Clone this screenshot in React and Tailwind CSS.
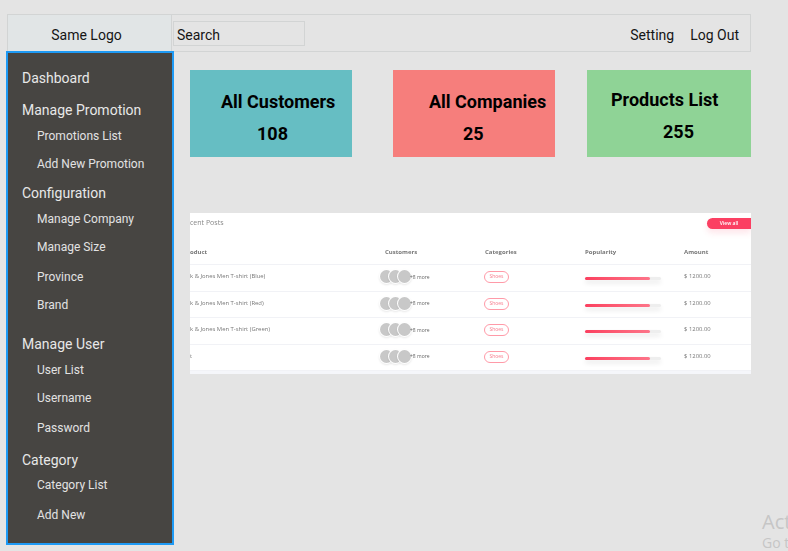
const roboto = { fontFamily: 'Roboto, sans-serif' };

const nav = [
  { t: 'Dashboard', top: true, c: 'h-[20px] mt-[15px]' },
  { t: 'Manage Promotion', top: true, c: 'h-[20px] mt-[12px]' },
  { t: 'Promotions List', c: 'h-[18px] mt-[7px]' },
  { t: 'Add New Promotion', c: 'h-[18px] mt-[10px]' },
  { t: 'Configuration', top: true, c: 'h-[20px] mt-[10px]' },
  { t: 'Manage Company', c: 'h-[18px] mt-[7px]' },
  { t: 'Manage Size', c: 'h-[18px] mt-[10px]' },
  { t: 'Province', c: 'h-[18px] mt-[12px]' },
  { t: 'Brand', c: 'h-[18px] mt-[10px]' },
  { t: 'Manage User', top: true, c: 'h-[20px] mt-[20px]' },
  { t: 'User List', c: 'h-[18px] mt-[7px]' },
  { t: 'Username', c: 'h-[18px] mt-[10px]' },
  { t: 'Password', c: 'h-[18px] mt-[12px]' },
  { t: 'Category', top: true, c: 'h-[20px] mt-[13px]' },
  { t: 'Category List', c: 'h-[18px] mt-[6px]' },
  { t: 'Add New', c: 'h-[18px] mt-[12px]' },
];

const rows = ['k & Jones Men T-shirt (Blue)', 'k & Jones Men T-shirt (Red)', 'k & Jones Men T-shirt (Green)', 't'];

function Card({ title, value, className, titleClass, valueClass }) {
  return (
    <div className={`h-[87px] text-black font-bold text-[18px] leading-[22px] ${className}`}>
      <div className={`whitespace-nowrap ${titleClass}`}>{title}</div>
      <div className={`whitespace-nowrap mt-[10px] ${valueClass}`}>{value}</div>
    </div>
  );
}

function Row({ name, className }) {
  return (
    <div className={`grid grid-cols-[190px_104px_101px_99px_1fr] items-start border-b border-[#f1f2f6] ${className}`}>
      <div className="text-[5.9px] leading-[8px] text-[#777] mt-[7px] whitespace-nowrap">{name}</div>
      <div className="flex items-center mt-[5px]">
        <span className="w-[13px] h-[13px] rounded-full bg-[#c8c8c8] shadow-[0_0_0_1px_#fff,0_1px_3px_#0003]" />
        <span className="w-[13px] h-[13px] rounded-full bg-[#c8c8c8] -ml-[4px] shadow-[0_0_0_1px_#fff,0_1px_3px_#0003]" />
        <span className="w-[13px] h-[13px] rounded-full bg-[#c8c8c8] -ml-[4px] shadow-[0_0_0_1px_#fff,0_1px_3px_#0003]" />
        <span className="text-[5px] leading-[8px] text-[#666] ml-[-1px] whitespace-nowrap">+8 more</span>
      </div>
      <div className="mt-[6px]">
        <span className="flex items-center justify-center w-[25px] h-[12px] rounded-full border border-[#ff9aa8] text-[5px] text-[#f77d8e]">Shoes</span>
      </div>
      <div className="mt-[12px] w-[76px] h-[3px] rounded-full bg-[#eeeeee] shadow-[0_3px_5px_#0000001a]">
        <div className="w-[65px] h-[3px] rounded-full bg-gradient-to-r from-[#fb3f5f] to-[#fd7489]" />
      </div>
      <div className="text-[5.9px] leading-[8px] text-[#777] mt-[7px] whitespace-nowrap">$ 1200.00</div>
    </div>
  );
}

export default function App() {
  return (
    <div className="relative w-[788px] h-[551px] overflow-hidden bg-[#e4e4e4] pt-[14px] pl-[6px]" style={roboto}>
      <header className="ml-[1px] w-[744px] h-[38px] flex border border-[#d2d4d4] text-[14px] text-[#151515]">
        <div className="w-[165px] shrink-0 -ml-px -mt-px h-[38px] bg-[#e1e5e6] border border-[#d2d4d4] flex items-end justify-center pb-[7px] pr-[6px] leading-[18px]">Same Logo</div>
        <div className="ml-[1px] mt-[6px] w-[132px] h-[25px] border border-[#d2d4d4] flex items-center pl-[3px] pt-[2px] leading-[18px]">Search</div>
        <div className="ml-auto mr-[11px] flex gap-[16px] items-center leading-[18px] pt-[3px]">
          <span>Setting</span>
          <span>Log Out</span>
        </div>
      </header>
      <div className="flex -mt-px">
        <nav className="w-[168px] h-[494px] shrink-0 border-2 border-[#1e9af5] bg-[#474542] pl-[14px] overflow-hidden">
          {nav.map((n) =>
            n.top ? (
              <div key={n.t} className={`text-[14px] leading-[20px] text-[#e8e8e8] whitespace-nowrap ${n.c}`}>{n.t}</div>
            ) : (
              <div key={n.t} className={`pl-[15px] text-[12px] leading-[18px] text-[#e2e2e2] whitespace-nowrap ${n.c}`}>{n.t}</div>
            )
          )}
        </nav>
        <main className="ml-[16px] w-[561px]">
          <div className="flex mt-[19px]">
            <Card title="All Customers" value="108" className="w-[162px] bg-[#66bec3] pt-[21px]" titleClass="ml-[31px]" valueClass="ml-[67px]" />
            <Card title="All Companies" value="25" className="ml-[41px] w-[162px] bg-[#f67e7c] pt-[21px]" titleClass="ml-[36px]" valueClass="ml-[70px]" />
            <Card title="Products List" value="255" className="ml-[32px] w-[164px] bg-[#8fd396] pt-[19px]" titleClass="ml-[24px]" valueClass="ml-[76px]" />
          </div>
          <section className="mt-[56px] h-[161px] bg-white overflow-hidden blur-[0.5px]" style={{ fontFamily: '"Open Sans", sans-serif' }}>
            <div className="h-[24px] flex items-start">
              <span className="text-[7px] leading-[10px] text-[#888] mt-[5px]">cent Posts</span>
              <span className="ml-auto mt-[5px] w-[44px] h-[11px] flex items-center justify-center rounded-l-full bg-[#fb3f62] text-[5px] font-semibold text-white shadow-[0_4px_6px_#fb3f6222]">View all</span>
            </div>
            <div className="grid grid-cols-[195px_100px_100px_99px_1fr] h-[27px] items-center text-[6px] font-bold text-[#777] border-b border-[#f1f2f6] pt-[2px] mt-[1px]">
              <span>oduct</span>
              <span>Customers</span>
              <span>Categories</span>
              <span>Popularity</span>
              <span>Amount</span>
            </div>
            {rows.map((r) => (
              <Row key={r} name={r} className="h-[26.5px]" />
            ))}
            <div className="h-[4px] bg-[#f5f6fa]" />
          </section>
        </main>
      </div>
      <div className="absolute left-[762px] top-[509px] text-[#c6c6c6] whitespace-nowrap" style={{ fontFamily: '"Open Sans", sans-serif' }}>
        <div className="text-[20px] leading-[26px]">Activate Windows</div>
        <div className="text-[14px] leading-[18px] -mt-[1px]">Go to Settings</div>
      </div>
    </div>
  );
}
